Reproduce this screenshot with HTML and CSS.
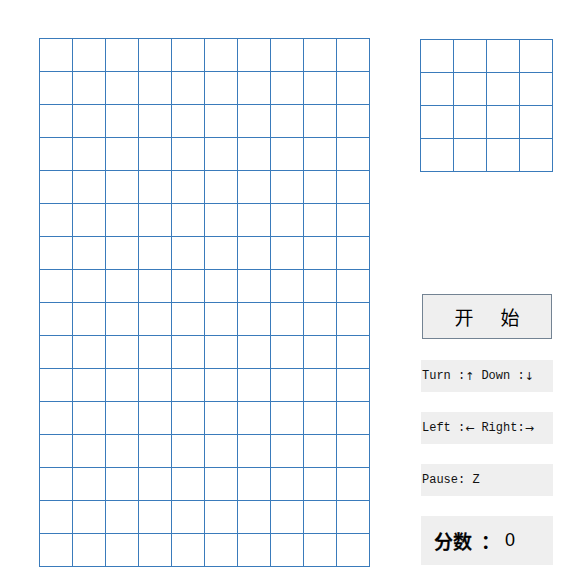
FILE: index.html
```html
<!DOCTYPE html>
<html>
<head>
<meta charset="utf-8">
<link rel="stylesheet" href="styles.css">
</head>
<body>
<div class="page">
  <div class="board" id="board"></div>
  <div class="side">
    <div class="preview" id="preview"></div>
    <div class="start-btn"><span>开</span><span>始</span></div>
    <div class="info">Turn :<span class="arrow">↑</span> Down :<span class="arrow">↓</span></div>
    <div class="info">Left :<span class="arrow">←</span> Right:<span class="arrow">→</span></div>
    <div class="info">Pause: Z</div>
    <div class="score"><span class="label">分数</span><span class="colon">：</span><span class="num">0</span></div>
  </div>
</div>
<script src="script.js"></script>
</body>
</html>
```
FILE: script.js
```js
function fill(id, n) {
  var el = document.getElementById(id);
  for (var i = 0; i < n; i++) {
    var c = document.createElement('div');
    c.className = 'cell';
    el.appendChild(c);
  }
}
fill('board', 160);
fill('preview', 16);
```
FILE: styles.css
```css
html, body {
  margin: 0;
  padding: 0;
  background: #ffffff;
}
.page {
  display: flex;
  align-items: flex-start;
  padding: 38px 0 0 39px;
  gap: 50px;
}
.board {
  display: grid;
  grid-template-columns: repeat(10, 32px);
  grid-auto-rows: 32px;
  gap: 1px;
  padding: 1px;
  background: #3a7bbb;
}
.preview {
  display: grid;
  grid-template-columns: repeat(4, 32px);
  grid-auto-rows: 32px;
  gap: 1px;
  padding: 1px;
  background: #3a7bbb;
  width: max-content;
}
.cell {
  background: #ffffff;
}
.side {
  display: flex;
  flex-direction: column;
  margin-top: 1px;
}
.start-btn {
  box-sizing: border-box;
  margin: 122px 0 0 2px;
  width: 130px;
  height: 45px;
  border: 1px solid #738393;
  background: #efefef;
  display: flex;
  justify-content: center;
  align-items: center;
  gap: 27px;
  font-family: "Noto Sans CJK SC", sans-serif;
  font-size: 19px;
  color: #000;
}
.info {
  box-sizing: border-box;
  margin: 20px 0 0 1px;
  width: 132px;
  height: 32px;
  background: #efefef;
  display: flex;
  align-items: center;
  padding-left: 1px;
  font-family: "Liberation Mono", monospace;
  font-size: 12px;
  color: #111;
  white-space: pre;
}
.info .arrow {
  font-family: "DejaVu Sans", sans-serif;
  font-size: 11px;
  display: inline-block;
  width: 9px;
  text-align: center;
}
.start-btn + .info {
  margin-top: 21px;
}
.score {
  box-sizing: border-box;
  margin: 20px 0 0 1px;
  width: 132px;
  height: 49px;
  background: #efefef;
  display: flex;
  align-items: center;
  padding-left: 13px;
  font-family: "Noto Sans CJK SC", sans-serif;
  font-size: 19px;
  color: #000;
}
.score .label {
  font-weight: 500;
  -webkit-text-stroke: 0.4px #000;
}
.score .colon {
  font-weight: 700;
  margin-left: 9px;
}
.score .num {
  font-family: "Liberation Sans", sans-serif;
  font-weight: 400;
  font-size: 18px;
  margin-left: 5px;
}
```
